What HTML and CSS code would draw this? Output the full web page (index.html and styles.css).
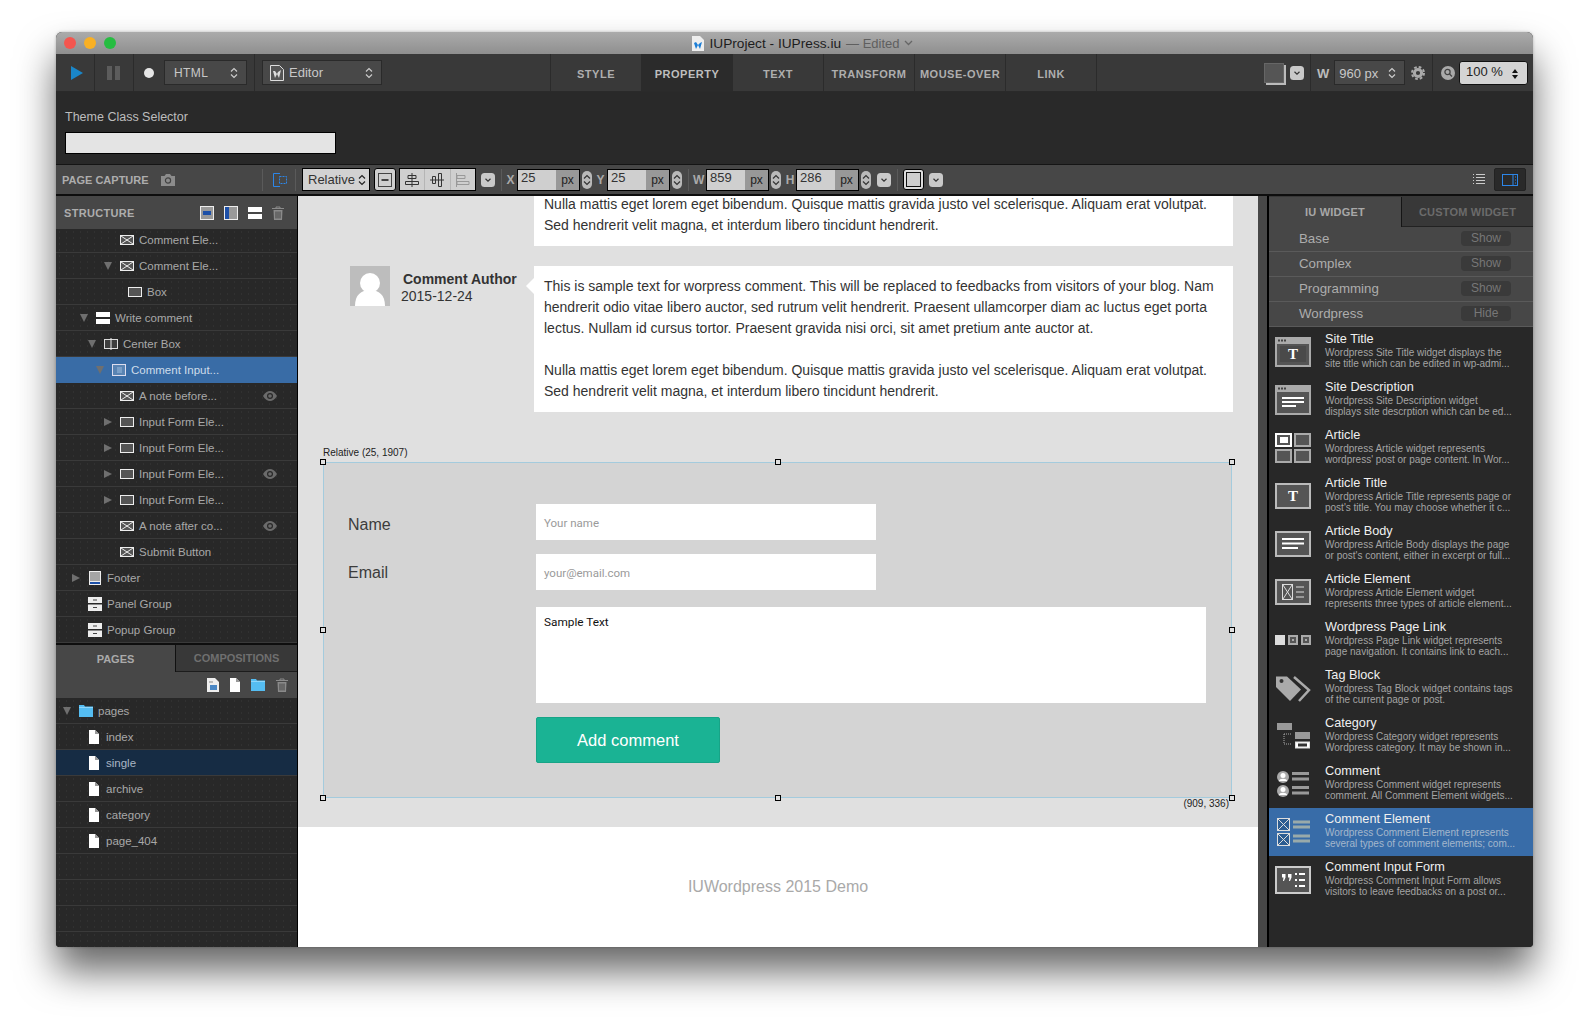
FILE: index.html
```html
<!DOCTYPE html>
<html lang="en">
<head>
    <meta charset="UTF-8">
    <title>IUProject - IUPress.iu</title>
    <link rel="stylesheet" href="styles.css">
</head>
<body>
    <svg class="sprites" width="0" height="0">
        <symbol id="updown" viewBox="0 0 8 12"><path d="M1 4.5 4 1.5l3 3M1 7.5l3 3 3-3" fill="none" stroke="currentColor" stroke-width="1.2"/></symbol>
        <symbol id="chev" viewBox="0 0 14 14"><rect width="14" height="14" rx="3.5" fill="#c9c9c9"/><path d="M4.5 5.8 7 8.2l2.5-2.4" fill="none" stroke="#333" stroke-width="1.2"/></symbol>
        <symbol id="cross" viewBox="0 0 14 10"><rect x=".5" y=".5" width="13" height="9" fill="#555" stroke="#eee"/><path d="M1 1l12 8M13 1 1 9" stroke="#eee" fill="none"/></symbol>
        <symbol id="box" viewBox="0 0 14 10"><rect x=".5" y=".5" width="13" height="9" fill="#555" stroke="#eee"/></symbol>
        <symbol id="section" viewBox="0 0 14 12"><rect width="14" height="5" fill="#fff"/><rect y="7" width="14" height="5" fill="#fff"/></symbol>
        <symbol id="center" viewBox="0 0 14 12"><rect x=".5" y="1.5" width="13" height="9" fill="#3d3d3d" stroke="#ddd"/><path d="M7 0v12" stroke="#eee"/></symbol>
        <symbol id="formbox" viewBox="0 0 14 12"><rect x=".5" y=".5" width="13" height="11" fill="#5a84b3" stroke="#dde"/><path d="M5 4h5M5 6h5M5 8h5" stroke="#9bbbdd"/></symbol>
        <symbol id="footer" viewBox="0 0 12 14"><rect width="12" height="14" fill="#eee"/><rect x="1" y="1" width="10" height="9" fill="#a5a5a5"/><rect x="1" y="11" width="10" height="2" fill="#1d50a8"/></symbol>
        <symbol id="group" viewBox="0 0 14 14"><rect width="14" height="6" fill="#eee"/><rect y="7.5" width="14" height="6.5" fill="#eee"/><path d="M5 3h4M5 10.5h4" stroke="#444"/></symbol>
        <symbol id="file" viewBox="0 0 10 14"><path d="M0 0h6l4 4v10H0z" fill="#fff"/><path d="M6 0v4h4" fill="#999"/></symbol>
        <symbol id="folder" viewBox="0 0 14 12"><path d="M0 0h5l1 1.5h8V12H0z" fill="#55bdf2"/><path d="M0 2.5h14" stroke="#8fd6fa"/></symbol>
        <symbol id="trash" viewBox="0 0 12 14"><path d="M0 2.5h12M4 2.5V1h4v1.5" fill="none" stroke="#8a8a8a"/><path d="M1.5 4h9L10 14H2z" fill="#8a8a8a"/><path d="M4 5.5V12.5M6 5.5V12.5M8 5.5V12.5" stroke="#444"/></symbol>
        <symbol id="eye" viewBox="0 0 14 10"><path d="M0 5c2-3.500 4.500-5 7-5s5 1.500 7 5c-2 3.500-4.500 5-7 5S2 8.500 0 5z" fill="#6b6b6b"/><circle cx="7" cy="5" r="3" fill="#282828"/><circle cx="7" cy="5" r="1.8" fill="#6b6b6b"/></symbol>
        <symbol id="w-frame-bar" viewBox="0 0 36 30"><rect x="1" y="1" width="34" height="28" fill="#555" stroke="#aaa" stroke-width="2"/><rect width="36" height="7" fill="#aaa"/><path d="M3 3.5h2M6 3.5h2M9 3.5h2" stroke="#444" stroke-width="2"/></symbol>
        <symbol id="w-frame" viewBox="0 0 36 26"><rect x="1" y="1" width="34" height="24" fill="#555" stroke="#bbb" stroke-width="2"/></symbol>
    </svg>

    <div class="window">
        <div class="titlebar">
            <div class="lights"><i class="red"></i><i class="yellow"></i><i class="green"></i></div>
            <div class="title">
                <svg class="doc" width="12" height="15" viewBox="0 0 12 15"><path d="M0 0h8l4 4v11H0z" fill="#eee"/><path d="M2 7l2 6 2-4 2 4 2-7-2 1-2 2-2-3z" fill="#1c7ed6"/></svg>
                <span>IUProject - IUPress.iu</span> <em>— Edited</em>
                <svg class="tchev" width="9" height="6" viewBox="0 0 9 6"><path d="M1 1l3.500 3.500L8 1" fill="none" stroke="#666" stroke-width="1.3"/></svg>
            </div>
        </div>

        <div class="toolbar">
            <div class="tool tool-play"><svg width="12" height="14" viewBox="0 0 12 14"><path d="M0 0l12 7-12 7z" fill="#1a86c8"/></svg></div>
            <div class="tool tool-pause"><i></i><i></i></div>
            <div class="tool tool-rec">
                <i class="rec-dot"></i>
                <div class="sel sel-html">HTML<svg class="ud"><use href="#updown"/></svg></div>
            </div>
            <div class="tool tool-editor">
                <div class="sel sel-editor">
                    <svg class="doc" width="14" height="16" viewBox="0 0 14 16"><path d="M.5.500h9l4 4v11H.5z" fill="#555" stroke="#ddd"/><path d="M3 6l2 7 2-4 2 4 2-8-3 2-1 2-2-3z" fill="#ddd"/></svg>
                    Editor<svg class="ud"><use href="#updown"/></svg>
                </div>
            </div>
            <div class="tabs">
                <div class="tab">STYLE</div>
                <div class="tab active">PROPERTY</div>
                <div class="tab">TEXT</div>
                <div class="tab">TRANSFORM</div>
                <div class="tab">MOUSE-OVER</div>
                <div class="tab">LINK</div>
            </div>
            <div class="tool tool-color">
                <span class="swatch"></span>
                <svg class="chev"><use href="#chev"/></svg>
            </div>
            <div class="tool tool-width">
                <b>W</b>
                <div class="sel sel-width">960 px<svg class="ud"><use href="#updown"/></svg></div>
                <svg class="gear" width="14" height="14" viewBox="0 0 14 14"><circle cx="7" cy="7" r="3.6" fill="none" stroke="#aaa" stroke-width="3"/><circle cx="7" cy="7" r="6" fill="none" stroke="#aaa" stroke-width="2" stroke-dasharray="2.7 2.01"/></svg>
            </div>
            <div class="tool tool-zoom">
                <svg width="14" height="14" viewBox="0 0 14 14"><circle cx="7" cy="7" r="7" fill="#aaa"/><circle cx="6.5" cy="6" r="2.6" fill="none" stroke="#444" stroke-width="1.3"/><path d="M8.5 8l2.500 2.500" stroke="#444" stroke-width="1.3"/></svg>
                <div class="zoom-box">100 %<span class="zoom-arrows"></span></div>
            </div>
        </div>

        <div class="theme">
            <label>Theme Class Selector</label>
            <div class="theme-input"></div>
        </div>

        <div class="controlbar">
            <div class="capture">
                <b>PAGE CAPTURE</b>
                <svg width="14" height="12" viewBox="0 0 14 12"><path d="M0 2h3.500L5 0h4l1.500 2H14v10H0z" fill="#8c8c8c"/><circle cx="7" cy="6.5" r="2.6" fill="none" stroke="#444" stroke-width="1.2"/></svg>
            </div>
            <span class="cdiv"></span>
            <svg class="pos-icon" width="14" height="14" viewBox="0 0 14 14"><path d="M7 .5H.5v13H7" fill="none" stroke="#2c86e8"/><rect x="6.5" y="3.5" width="7" height="7" fill="none" stroke="#2c86e8" stroke-dasharray="2 1"/></svg>
            <span class="cdiv"></span>
            <div class="field field-select">Relative<svg class="ud"><use href="#updown"/></svg></div>
            <div class="iconbtn"><svg width="14" height="14" viewBox="0 0 14 14"><rect x=".5" y=".5" width="13" height="13" fill="none" stroke="#444"/><path d="M3.500 7h7" stroke="#444" stroke-width="2"/></svg></div>
            <div class="aligns">
                <span><svg width="14" height="14" viewBox="0 0 14 14"><path d="M7 0v14M3 2.500h8v3H3zM.5 8.500h13v3H.5z" fill="none" stroke="#333"/></svg></span>
                <span><svg width="14" height="14" viewBox="0 0 14 14"><path d="M0 7h14M2.500 3.500h3v7h-3zM8.500 .5h3v13h-3z" fill="none" stroke="#333"/></svg></span>
                <span><svg width="14" height="14" viewBox="0 0 14 14"><path d="M.5 0v14M1 2.500h8v3H1zM1 8.500h12v3H1z" fill="none" stroke="#999"/></svg></span>
            </div>
            <svg class="chev chev-a"><use href="#chev"/></svg>
            <span class="cdiv cdiv-a"></span>
            <span class="axis axis-x">X</span>
            <div class="num"><span>25</span><i>px</i></div>
            <svg class="step"><use href="#updown"/></svg>
            <span class="axis axis-y">Y</span>
            <div class="num"><span>25</span><i>px</i></div>
            <svg class="step"><use href="#updown"/></svg>
            <span class="cdiv cdiv-b"></span>
            <span class="axis axis-w">W</span>
            <div class="num"><span>859</span><i>px</i></div>
            <svg class="step"><use href="#updown"/></svg>
            <span class="axis axis-h">H</span>
            <div class="num num-h"><span>286</span><i>px</i></div>
            <svg class="step"><use href="#updown"/></svg>
            <svg class="chev chev-b"><use href="#chev"/></svg>
            <span class="cdiv cdiv-c"></span>
            <span class="border-well"><i></i></span>
            <svg class="chev chev-c"><use href="#chev"/></svg>
            <div class="control-right">
                <svg width="12" height="11" viewBox="0 0 12 11"><path d="M0 .5h1M3 .5h9M0 3.500h1M3 3.500h9M0 6.500h1M3 6.500h9M0 9.500h1M3 9.500h9" stroke="#ccc"/></svg>
                <div class="panel-toggle"><svg width="16" height="12" viewBox="0 0 16 12"><rect x=".5" y=".5" width="15" height="11" fill="none" stroke="#2c86e8"/><path d="M11 0v12M13 3h1M13 6h1M13 9h1" stroke="#2c86e8"/></svg></div>
            </div>
        </div>

        <div class="main">
            <aside class="left">
                <div class="head">
                    <b>STRUCTURE</b>
                    <div class="head-icons">
                        <svg width="14" height="14" viewBox="0 0 14 14"><rect x=".5" y=".5" width="13" height="13" fill="#999" stroke="#eee"/><rect x="3" y="5" width="8" height="4" fill="#1d50a8"/></svg>
                        <svg width="14" height="14" viewBox="0 0 14 14"><rect x=".5" y=".5" width="13" height="13" fill="#999" stroke="#eee"/><rect x="1" y="1" width="4" height="12" fill="#1d50a8"/></svg>
                        <svg width="14" height="12" viewBox="0 0 14 12"><use href="#section"/></svg>
                        <svg width="12" height="14" viewBox="0 0 12 14"><use href="#trash"/></svg>
                    </div>
                </div>
                <div class="tree">
                    <div class="row first lv5"><i class="sp"></i><svg class="ic"><use href="#cross"/></svg>Comment Ele...</div>
                    <div class="row lv5"><i class="tw down"></i><svg class="ic"><use href="#cross"/></svg>Comment Ele...</div>
                    <div class="row lv6"><i class="sp"></i><svg class="ic"><use href="#box"/></svg>Box</div>
                    <div class="row lv2"><i class="tw down"></i><svg class="ic"><use href="#section"/></svg>Write comment</div>
                    <div class="row lv3"><i class="tw down"></i><svg class="ic"><use href="#center"/></svg>Center Box</div>
                    <div class="row lv4 selected"><i class="tw down"></i><svg class="ic"><use href="#formbox"/></svg>Comment Input...</div>
                    <div class="row lv5"><i class="sp"></i><svg class="ic"><use href="#cross"/></svg>A note before...<svg class="eye"><use href="#eye"/></svg></div>
                    <div class="row lv5"><i class="tw"></i><svg class="ic"><use href="#box"/></svg>Input Form Ele...</div>
                    <div class="row lv5"><i class="tw"></i><svg class="ic"><use href="#box"/></svg>Input Form Ele...</div>
                    <div class="row lv5"><i class="tw"></i><svg class="ic"><use href="#box"/></svg>Input Form Ele...<svg class="eye"><use href="#eye"/></svg></div>
                    <div class="row lv5"><i class="tw"></i><svg class="ic"><use href="#box"/></svg>Input Form Ele...</div>
                    <div class="row lv5"><i class="sp"></i><svg class="ic"><use href="#cross"/></svg>A note after co...<svg class="eye"><use href="#eye"/></svg></div>
                    <div class="row lv5"><i class="sp"></i><svg class="ic"><use href="#cross"/></svg>Submit Button</div>
                    <div class="row lv1"><i class="tw"></i><svg class="ic ic-tall"><use href="#footer"/></svg>Footer</div>
                    <div class="row lv1"><i class="sp"></i><svg class="ic ic-tall"><use href="#group"/></svg>Panel Group</div>
                    <div class="row lv1"><i class="sp"></i><svg class="ic ic-tall"><use href="#group"/></svg>Popup Group</div>
                </div>
                <div class="subtabs">
                    <div class="subtab on">PAGES</div>
                    <div class="subtab">COMPOSITIONS</div>
                </div>
                <div class="page-tools">
                    <svg width="12" height="14" viewBox="0 0 12 14"><path d="M0 0h8l4 4v10H0z" fill="#eee"/><rect x="3" y="7" width="7" height="5" fill="#4a87c5"/><path d="M2 4h4" stroke="#888"/></svg>
                    <svg width="10" height="14" viewBox="0 0 10 14"><use href="#file"/></svg>
                    <svg width="14" height="12" viewBox="0 0 14 12"><use href="#folder"/></svg>
                    <svg width="12" height="14" viewBox="0 0 12 14"><use href="#trash"/></svg>
                </div>
                <div class="pages">
                    <div class="row lv0"><i class="tw down"></i><svg class="ic ic-folder"><use href="#folder"/></svg>pages</div>
                    <div class="row page"><svg class="ic-file"><use href="#file"/></svg>index</div>
                    <div class="row page current"><svg class="ic-file"><use href="#file"/></svg>single</div>
                    <div class="row page"><svg class="ic-file"><use href="#file"/></svg>archive</div>
                    <div class="row page"><svg class="ic-file"><use href="#file"/></svg>category</div>
                    <div class="row page"><svg class="ic-file"><use href="#file"/></svg>page_404</div>
                    <div class="row"></div>
                    <div class="row"></div>
                    <div class="row"></div>
                    <div class="row"></div>
                </div>
            </aside>

            <div class="canvas">
                <div class="page-gray">
                    <div class="comment-card card-cut">
                        <p>Nulla mattis eget lorem eget bibendum. Quisque mattis gravida justo vel scelerisque. Aliquam erat volutpat.<br>Sed hendrerit velit magna, et interdum libero tincidunt hendrerit.</p>
                    </div>
                    <div class="comment">
                        <div class="avatar">
                            <svg width="40" height="40" viewBox="0 0 40 40"><circle cx="20" cy="17" r="10" fill="#fff"/><path d="M5 40c0-11 6-16 15-16s15 5 15 16z" fill="#fff"/></svg>
                        </div>
                        <div class="author">
                            <b>Comment Author</b>
                            <span>2015-12-24</span>
                        </div>
                        <div class="comment-card">
                            <p>This is sample text for worpress comment. This will be replaced to feedbacks from visitors of your blog. Nam hendrerit odio vitae libero auctor, sed rutrum velit hendrerit. Praesent ullamcorper diam ac luctus eget porta lectus. Nullam id cursus tortor. Praesent gravida nisi orci, sit amet pretium ante auctor at.<br><br>Nulla mattis eget lorem eget bibendum. Quisque mattis gravida justo vel scelerisque. Aliquam erat volutpat.<br>Sed hendrerit velit magna, et interdum libero tincidunt hendrerit.</p>
                        </div>
                    </div>
                    <div class="form-box">
                        <span class="sel-label">Relative (25, 1907)</span>
                        <span class="sel-size">(909, 336)</span>
                        <i class="h h-tl"></i><i class="h h-tc"></i><i class="h h-tr"></i>
                        <i class="h h-ml"></i><i class="h h-mr"></i>
                        <i class="h h-bl"></i><i class="h h-bc"></i><i class="h h-br"></i>
                        <div class="flabel flabel-name">Name</div>
                        <div class="finput">Your name</div>
                        <div class="flabel">Email</div>
                        <div class="finput">your@email.com</div>
                        <div class="ftext">Sample Text</div>
                        <div class="fbutton">Add comment</div>
                    </div>
                </div>
                <div class="page-foot">IUWordpress 2015 Demo</div>
            </div>
            <div class="strip"></div>

            <aside class="right">
                <div class="rtabs">
                    <div class="rtab on">IU WIDGET</div>
                    <div class="rtab">CUSTOM WIDGET</div>
                </div>
                <div class="cat"><span>Base</span><em>Show</em></div>
                <div class="cat"><span>Complex</span><em>Show</em></div>
                <div class="cat"><span>Programming</span><em>Show</em></div>
                <div class="cat"><span>Wordpress</span><em>Hide</em></div>
                <div class="widgets">
                    <div class="widget">
                        <svg class="wi" width="36" height="30" viewBox="0 0 36 30"><use href="#w-frame-bar"/><rect x="5" y="9" width="26" height="16" fill="#4a4a4a"/><text x="18" y="22" class="wt">T</text></svg>
                        <div class="wb"><h4>Site Title</h4><p>Wordpress Site Title widget displays the<br>site title which can be edited in wp-admi...</p></div>
                    </div>
                    <div class="widget">
                        <svg class="wi" width="36" height="30" viewBox="0 0 36 30"><use href="#w-frame-bar"/><path d="M7 13h22M7 17h22M7 21h14" stroke="#fff" stroke-width="2"/></svg>
                        <div class="wb"><h4>Site Description</h4><p>Wordpress Site Description widget<br>displays site descrption which can be ed...</p></div>
                    </div>
                    <div class="widget">
                        <svg class="wi" width="36" height="30" viewBox="0 0 36 30"><rect x="1" y="1" width="15" height="12" fill="#555" stroke="#fff" stroke-width="2"/><rect x="5" y="4" width="8" height="6" fill="#fff"/><rect x="20" y="1" width="15" height="12" fill="#555" stroke="#aaa" stroke-width="2"/><rect x="1" y="17" width="15" height="12" fill="#555" stroke="#aaa" stroke-width="2"/><rect x="20" y="17" width="15" height="12" fill="#555" stroke="#aaa" stroke-width="2"/></svg>
                        <div class="wb"><h4>Article</h4><p>Wordpress Article widget represents<br>wordpress' post or page content. In Wor...</p></div>
                    </div>
                    <div class="widget">
                        <svg class="wi" width="36" height="26" viewBox="0 0 36 26"><use href="#w-frame"/><text x="18" y="18" class="wt">T</text></svg>
                        <div class="wb"><h4>Article Title</h4><p>Wordpress Article Title represents page or<br>post's title. You may choose whether it c...</p></div>
                    </div>
                    <div class="widget">
                        <svg class="wi" width="36" height="26" viewBox="0 0 36 26"><use href="#w-frame"/><path d="M7 8h22M7 12.5h22M7 17h16" stroke="#fff" stroke-width="2"/></svg>
                        <div class="wb"><h4>Article Body</h4><p>Wordpress Article Body displays the page<br>or post's content, either in excerpt or full...</p></div>
                    </div>
                    <div class="widget">
                        <svg class="wi" width="36" height="26" viewBox="0 0 36 26"><use href="#w-frame"/><rect x="7.500" y="5.500" width="10" height="15" fill="none" stroke="#ddd"/><path d="M8 6l9 14M17 6 8 20" stroke="#ddd"/><path d="M21 8h8M21 13h8M21 18h8" stroke="#999" stroke-width="2"/></svg>
                        <div class="wb"><h4>Article Element</h4><p>Wordpress Article Element widget<br>represents three types of article element...</p></div>
                    </div>
                    <div class="widget">
                        <svg class="wi" width="36" height="10" viewBox="0 0 36 10"><rect width="10" height="10" fill="#ddd"/><rect x="14" y="1" width="8" height="8" fill="#555" stroke="#aaa" stroke-width="2"/><rect x="17" y="4" width="2" height="2" fill="#aaa"/><rect x="27" y="1" width="8" height="8" fill="#555" stroke="#aaa" stroke-width="2"/><rect x="30" y="4" width="2" height="2" fill="#aaa"/></svg>
                        <div class="wb"><h4>Wordpress Page Link</h4><p>Wordpress Page Link widget represents<br>page navigation. It contains link to each...</p></div>
                    </div>
                    <div class="widget">
                        <svg class="wi" width="36" height="28" viewBox="0 0 36 28"><path d="M1 2.500h11l14 13L15 27 1 13z" fill="#aaa"/><circle cx="6.500" cy="7" r="2" fill="#333"/><path d="M19 3l15 13-10 11" fill="none" stroke="#aaa" stroke-width="2.500"/></svg>
                        <div class="wb"><h4>Tag Block</h4><p>Wordpress Tag Block widget contains tags<br>of the current page or post.</p></div>
                    </div>
                    <div class="widget">
                        <svg class="wi" width="36" height="26" viewBox="0 0 36 26"><rect x="2" y="0" width="15" height="7" fill="#999"/><rect x="20" y="9" width="15" height="7" fill="#999"/><rect x="20.5" y="19" width="14" height="6" fill="#fff" stroke="#ddd"/><rect x="23" y="20.5" width="9" height="3" fill="#333"/><path d="M9 11h8M9 11v10h8" fill="none" stroke="#aaa" stroke-dasharray="1 1"/></svg>
                        <div class="wb"><h4>Category</h4><p>Wordpress Category widget represents<br>Wordpress category. It may be shown in...</p></div>
                    </div>
                    <div class="widget">
                        <svg class="wi" width="36" height="28" viewBox="0 0 36 28"><g id="cperson"><circle cx="8" cy="7" r="6" fill="#aaa"/><circle cx="8" cy="5.500" r="2.500" fill="#fff"/><path d="M4 11c0-3 8-3 8 0z" fill="#fff"/><path d="M17 3.500h17M17 9h17" stroke="#999" stroke-width="3"/></g><use href="#cperson" y="14"/></svg>
                        <div class="wb"><h4>Comment</h4><p>Wordpress Comment widget represents<br>comment. All Comment Element widgets...</p></div>
                    </div>
                    <div class="widget on">
                        <svg class="wi" width="36" height="28" viewBox="0 0 36 28"><rect x="2.500" y=".5" width="12" height="12" fill="#2c5c91" stroke="#ddd"/><rect x="2.500" y="15.500" width="12" height="12" fill="#2c5c91" stroke="#ddd"/><path d="M3 1l11 11M14 1 3 12M3 16l11 11M14 16 3 27" stroke="#ddd"/><path d="M18 4h17M18 9h17M18 18h17M18 23h17" stroke="#9aa" stroke-width="3"/></svg>
                        <div class="wb"><h4>Comment Element</h4><p>Wordpress Comment Element represents<br>several types of comment elements; com...</p></div>
                    </div>
                    <div class="widget">
                        <svg class="wi" width="36" height="28" viewBox="0 0 36 28"><rect x="1" y="1" width="34" height="26" fill="#555" stroke="#ccc" stroke-width="2"/><path d="M7 8h3.500v3.500L9 15H8l.5-3.500H7zM13 8h3.500v3.500L15 15h-1l.5-3.500H13z" fill="#fff"/><path d="M20 8h2M24 8h6M20 14h2M24 14h6M20 20h2M24 20h6" stroke="#fff" stroke-width="2"/></svg>
                        <div class="wb"><h4>Comment Input Form</h4><p>Wordpress Comment Input Form allows<br>visitors to leave feedbacks on a post or...</p></div>
                    </div>
                </div>
            </aside>
        </div>
    </div>
</body>
</html>
```

FILE: styles.css
```css
* {
    box-sizing: border-box;
}

html, body {
    height: 100%;
}

body {
    margin: 0;
    padding: 32px 56px 0;
    background: #fff;
    font-family: 'Liberation Sans', Arial, sans-serif;
    overflow: hidden;
}

.sprites {
    position: absolute;
}

i, em {
    font-style: normal;
}

.window {
    width: 1477px;
    height: 915px;
    display: flex;
    flex-direction: column;
    background: #282828;
    border-radius: 6px 6px 4px 4px;
    box-shadow: 0 24px 38px rgba(0, 0, 0, 0.6), 0 0 3px rgba(0, 0, 0, 0.25);
    overflow: hidden;
}

/* title bar */
.titlebar {
    height: 22px;
    flex: none;
    display: flex;
    align-items: center;
    background: linear-gradient(#ababab, #8f8f8f);
    position: relative;
}

.lights {
    display: flex;
    gap: 8px;
    margin-left: 8px;
}

.lights i {
    width: 12px;
    height: 12px;
    border-radius: 50%;
}

.red { background: #f4564f; }
.yellow { background: #f9b024; }
.green { background: #26bd41; }

.title {
    position: absolute;
    left: 0;
    right: 0;
    top: 0;
    height: 22px;
    display: flex;
    align-items: center;
    justify-content: center;
    gap: 5px;
    font-size: 13px;
    color: #1d1d1d;
    padding-left: 16px;
}

.title span {
    font-size: 13.7px;
}

.title em {
    color: #5f5f5f;
}

.tchev {
    margin-left: -1px;
}

/* top toolbar */
.toolbar {
    height: 38px;
    flex: none;
    display: flex;
    background: #393939;
    border-bottom: 1px solid #2a2a2a;
}

.tool {
    display: flex;
    align-items: center;
    border-right: 1px solid #2b2b2b;
}

.tool-play { width: 39px; padding-left: 15px; }

.tool-pause {
    width: 39px;
    padding-left: 12px;
    gap: 3px;
}

.tool-pause i {
    width: 5px;
    height: 14px;
    background: #5c5c5c;
}

.tool-rec { width: 121px; padding-left: 10px; }

.rec-dot {
    width: 10px;
    height: 10px;
    border-radius: 50%;
    background: #e6e6e6;
    margin-right: 10px;
}

.sel {
    height: 25px;
    display: flex;
    align-items: center;
    position: relative;
    background: #484848;
    border: 1px solid #2a2a2a;
    color: #c8c8c8;
    font-size: 13px;
}

.ud {
    width: 8px;
    height: 12px;
    color: #ccc;
    position: absolute;
    right: 8px;
    top: 50%;
    margin-top: -6px;
}

.sel-html { width: 83px; padding-left: 9px; font-size: 12px; letter-spacing: 0.4px; }

.tool-editor { width: 296px; padding-left: 7px; }

.sel-editor {
    width: 120px;
    padding-left: 7px;
    gap: 5px;
}

.tabs {
    display: flex;
}

.tab {
    width: 91px;
    display: flex;
    align-items: center;
    justify-content: center;
    padding-top: 2px;
    border-right: 1px solid #2b2b2b;
    font-size: 11px;
    font-weight: bold;
    letter-spacing: 0.5px;
    color: #aeaeae;
}

.tab.active {
    background: #2b2b2b;
    color: #bebebe;
}

.tool-color {
    width: 214px;
    justify-content: flex-end;
    padding-right: 6px;
    gap: 6px;
}

.swatch {
    width: 20px;
    height: 20px;
    background: #555;
    border: 1px solid #666;
    box-shadow: 2px 2px 0 #bbb;
}

.chev {
    width: 14px;
    height: 14px;
    flex: none;
}

.tool-width {
    width: 122px;
    padding-left: 6px;
    gap: 5px;
    color: #bbb;
    font-size: 13px;
}

.tool-width b {
    padding-top: 1px;
}

.sel-width {
    width: 71px;
    padding: 1px 0 0 4px;
    background: #484848;
    font-size: 13px;
}

.gear {
    margin-left: 1px;
}

.tool-zoom {
    flex: 1;
    border-right: 0;
    padding-left: 8px;
    gap: 4px;
}

.zoom-box {
    width: 69px;
    height: 24px;
    background: #d4d4d4;
    border: 1px solid #111;
    border-radius: 3px;
    font-size: 13px;
    color: #222;
    padding: 2px 0 0 6px;
    position: relative;
}

.zoom-arrows {
    position: absolute;
    right: 9px;
    top: 7px;
    border-left: 3px solid transparent;
    border-right: 3px solid transparent;
    border-bottom: 4px solid #111;
}

.zoom-arrows::after {
    content: "";
    position: absolute;
    left: -3px;
    top: 6px;
    border-left: 3px solid transparent;
    border-right: 3px solid transparent;
    border-top: 4px solid #111;
}

/* theme selector */
.theme {
    height: 72px;
    flex: none;
    padding: 17px 9px 0;
    background: #292929;
}

.theme label {
    display: block;
    font-size: 12.5px;
    line-height: 16px;
    color: #bdbdbd;
    margin-bottom: 7px;
}

.theme-input {
    width: 271px;
    height: 22px;
    background: #e4e4e4;
    border: 1px solid #000;
}

/* position control bar */
.controlbar {
    height: 32px;
    flex: none;
    display: flex;
    align-items: center;
    background: #474747;
    border-top: 1px solid #151515;
    border-bottom: 2px solid #0e0e0e;
}

.capture {
    width: 206px;
    display: flex;
    align-items: center;
    gap: 12px;
    padding-left: 6px;
    font-size: 11px;
    color: #adadad;
}

.cdiv {
    width: 1px;
    height: 22px;
    background: #5a5a5a;
    flex: none;
}

.pos-icon {
    margin: 0 8px 0 10px;
}

.field-select {
    width: 68px;
    height: 23px;
    margin-left: 6px;
    padding: 3px 0 0 5px;
    font-size: 13px;
    color: #333;
    background: #d2d2d2;
    border: 1px solid #000;
    position: relative;
}

.field-select .ud {
    color: #222;
    right: 3px;
}

.iconbtn {
    width: 22px;
    height: 23px;
    margin-left: 4px;
    display: flex;
    align-items: center;
    justify-content: center;
    background: #cfcfcf;
    border: 1px solid #000;
    border-radius: 3px;
}

.aligns {
    display: flex;
    width: 77px;
    height: 23px;
    margin-left: 3px;
    background: #cfcfcf;
    border: 1px solid #000;
}

.aligns span {
    flex: 1;
    display: flex;
    align-items: center;
    justify-content: center;
    border-right: 1px solid #b5b5b5;
}

.aligns span:last-child {
    border-right: 0;
}

.chev-a { margin-left: 5px; }
.cdiv-a { margin-left: 6px; }

.axis {
    font-size: 12px;
    font-weight: bold;
    color: #aaa;
    width: 11px;
    text-align: center;
    flex: none;
}

.axis-x { margin: 0 1px 0 3px; }
.axis-y { margin: 0 1px 0 3px; }
.axis-w { margin: 0 2px 0 4px; }
.axis-h { margin: 0 1px 0 4px; width: 10px; }

.num {
    width: 63px;
    height: 22px;
    display: flex;
    background: #cfcfcf;
    border: 1px solid #000;
    font-size: 13px;
    color: #333;
}

.num span {
    flex: 1;
    padding: 0 0 0 3px;
    line-height: 16px;
}

.num i {
    width: 23px;
    background: #989898;
    font-size: 12px;
    line-height: 20px;
    text-align: center;
    color: #222;
}

.step {
    width: 10px;
    height: 18px;
    margin-left: 2px;
    padding: 1px;
    background: #b9b9b9;
    border-radius: 5px;
    color: #333;
    flex: none;
}

.chev-b { margin-left: 6px; }
.cdiv-b { margin-left: 6px; }
.cdiv-c { margin-left: 6px; }

.border-well {
    width: 21px;
    height: 21px;
    margin-left: 5px;
    padding: 2px;
    background: #ddd;
    border: 1px solid #000;
    border-radius: 3px;
}

.border-well i {
    display: block;
    height: 100%;
    background: #cfcfcf;
    border: 1px solid #111;
}

.chev-c { margin-left: 5px; }

.control-right {
    margin-left: auto;
    display: flex;
    align-items: center;
    gap: 9px;
    padding-right: 7px;
}

.panel-toggle {
    width: 32px;
    height: 23px;
    display: flex;
    align-items: center;
    justify-content: center;
    background: #2a2a2a;
    border: 1px solid #222;
    border-radius: 2px;
}

/* workspace */
.main {
    flex: 1;
    min-height: 0;
    display: flex;
}

/* left column */
.left {
    width: 242px;
    flex: none;
    display: flex;
    flex-direction: column;
    background: #282828;
    border-right: 1px solid #000;
    overflow: hidden;
}

.head {
    height: 33px;
    flex: none;
    display: flex;
    align-items: center;
    justify-content: space-between;
    padding: 0 13px 0 8px;
    background: #474747;
    font-size: 11px;
    letter-spacing: 0.3px;
    color: #adadad;
}

.head-icons {
    display: flex;
    align-items: center;
    gap: 10px;
}

.row {
    height: 26px;
    flex: none;
    display: flex;
    align-items: center;
    position: relative;
    font-size: 11.5px;
    color: #a8a8a8;
    border-bottom: 1px solid #3a3a3a;
    background-color: #282828;
    background-image: radial-gradient(#313131 0.6px, transparent 0.8px);
    background-size: 7px 6px;
}

.row.first {
    height: 24px;
    padding-bottom: 1px;
}

.lv0 { padding-left: 7px; }
.lv1 { padding-left: 16px; }
.lv2 { padding-left: 24px; }
.lv3 { padding-left: 32px; }
.lv4 { padding-left: 40px; }
.lv5 { padding-left: 48px; }
.lv6 { padding-left: 56px; }

.row.selected {
    background: #396ca6;
    color: #cfdcea;
    border-bottom-color: #396ca6;
}

.tw, .sp {
    width: 16px;
    flex: none;
}

.tw::before {
    content: "";
    display: block;
    width: 0;
    height: 0;
    border-top: 4.5px solid transparent;
    border-bottom: 4.5px solid transparent;
    border-left: 8px solid #6f6f6f;
}

.tw.down::before {
    border-left: 4.5px solid transparent;
    border-right: 4.5px solid transparent;
    border-bottom: 0;
    border-top: 8px solid #6f6f6f;
}

.ic {
    width: 14px;
    height: 12px;
    margin-right: 5px;
    flex: none;
}

.ic-tall {
    height: 14px;
}

.ic-folder {
    margin-left: 0;
}

.ic-file {
    width: 10px;
    height: 14px;
    margin-right: 7px;
    flex: none;
}

.row.page {
    padding-left: 33px;
}

.row.current {
    background: #162c44;
    color: #a9b6c4;
}

.eye {
    position: absolute;
    right: 20px;
    top: 8px;
    width: 14px;
    height: 10px;
}

.subtabs {
    height: 29px;
    flex: none;
    display: flex;
    border-top: 2px solid #0e0e0e;
    background: #383838;
}

.subtab {
    flex: 1;
    display: flex;
    align-items: center;
    justify-content: center;
    font-size: 11px;
    font-weight: bold;
    color: #6f6f6f;
    border-bottom: 1px solid #1c1c1c;
}

.subtab.on {
    flex: none;
    width: 120px;
    background: #474747;
    color: #aaa;
    border-right: 1px solid #111;
    border-bottom: 0;
}

.page-tools {
    height: 26px;
    flex: none;
    display: flex;
    align-items: center;
    justify-content: flex-end;
    gap: 11px;
    padding-right: 9px;
    background: #474747;
}

/* canvas */
.canvas {
    width: 960px;
    flex: none;
    display: flex;
    flex-direction: column;
    background: #fff;
    overflow: hidden;
}

.page-gray {
    height: 631px;
    flex: none;
    padding-left: 25px;
    background: #e0e0e0;
}

.comment-card {
    width: 699px;
    height: 146px;
    padding: 10px;
    background: #fff;
    position: relative;
    font-size: 14px;
    line-height: 21px;
    color: #333;
}

.comment-card p {
    margin: 0;
}

.card-cut {
    height: 50px;
    margin-left: 211px;
    padding-top: 0;
    overflow: hidden;
}

.card-cut p {
    margin-top: -2px;
}

.comment {
    display: flex;
    align-items: flex-start;
    margin-top: 20px;
    padding-left: 27px;
}

.avatar {
    width: 40px;
    height: 40px;
    flex: none;
    background: #bdbdbd;
    overflow: hidden;
}

.author {
    width: 144px;
    padding: 5px 0 0 11px;
    color: #333;
    font-size: 14px;
    line-height: 17px;
}

.author b {
    display: block;
    padding-left: 2px;
}

.author span {
    display: block;
}

.comment .comment-card::before {
    content: "";
    position: absolute;
    left: -8px;
    top: 12px;
    width: 8px;
    height: 16px;
    background: #fff;
    clip-path: polygon(100% 0, 0 50%, 100% 100%);
}

.form-box {
    width: 909px;
    height: 336px;
    margin-top: 50px;
    position: relative;
    display: grid;
    grid-template-columns: 188px 1fr;
    grid-template-rows: 36px 36px 99px 46px;
    gap: 14px 0;
    padding: 41px 0 0 24px;
    background: #d4d4d4;
    border: 1px solid #a4cbdd;
}

.flabel {
    font-size: 16px;
    line-height: 38px;
    color: #3c3c3c;
}

.flabel-name {
    padding-top: 2px;
}

.finput {
    width: 340px;
    padding: 0 8px;
    background: #fff;
    font-family: Roboto, sans-serif;
    font-size: 11.5px;
    line-height: 39px;
    color: #9a9a9a;
}

.ftext {
    grid-column: 2;
    width: 670px;
    margin-top: 3px;
    padding: 8px;
    background: #fff;
    font-family: Roboto, sans-serif;
    font-size: 11.8px;
    line-height: 15px;
    color: #111;
}

.fbutton {
    grid-column: 2;
    width: 184px;
    height: 46px;
    background: #1ab394;
    border: 1px solid #17a487;
    border-radius: 2px;
    font-size: 16.5px;
    line-height: 44px;
    text-align: center;
    color: #fff;
}

.sel-label, .sel-size {
    position: absolute;
    font-size: 10px;
    line-height: 12px;
    color: #222;
}

.sel-label { left: -1px; top: -16px; }
.sel-size { right: 2px; bottom: -13px; }

.h {
    position: absolute;
    width: 6px;
    height: 6px;
    background: #e0e0e0;
    border: 1px solid #000;
}

.h-tl { left: -4px; top: -4px; }
.h-tc { left: 451px; top: -4px; }
.h-tr { right: -4px; top: -4px; }
.h-ml { left: -4px; top: 164px; }
.h-mr { right: -4px; top: 164px; }
.h-bl { left: -4px; bottom: -4px; }
.h-bc { left: 451px; bottom: -4px; }
.h-br { right: -4px; bottom: -4px; }

.page-foot {
    flex: 1;
    padding-top: 50px;
    text-align: center;
    font-size: 16px;
    line-height: 20px;
    color: #a9a9a9;
}

.strip {
    width: 9px;
    flex: none;
    background: #474747;
}

/* right column */
.right {
    flex: 1;
    min-width: 0;
    display: flex;
    flex-direction: column;
    border-left: 2px solid #000;
    background: #282828;
}

.rtabs {
    height: 31px;
    flex: none;
    display: flex;
    padding-top: 1px;
    background: #383838;
}

.rtab {
    flex: 1;
    display: flex;
    align-items: center;
    justify-content: center;
    font-size: 11px;
    font-weight: bold;
    letter-spacing: 0.2px;
    color: #6b6b6b;
    border-bottom: 1px solid #222;
}

.rtab.on {
    flex: none;
    width: 133px;
    background: #474747;
    color: #a8a8a8;
    border-right: 1px solid #151515;
    border-bottom: 0;
}

.cat {
    height: 25px;
    flex: none;
    display: flex;
    align-items: center;
    justify-content: space-between;
    padding: 0 22px 2px 30px;
    background: #474747;
    border-bottom: 1px solid #5a5a5a;
    font-size: 13.3px;
    color: #adadad;
}

.cat:last-of-type {
    height: 24px;
}

.cat em {
    width: 50px;
    height: 15px;
    background: #3a3a3a;
    border-radius: 4px;
    font-size: 12px;
    line-height: 15px;
    text-align: center;
    color: #777;
}

.widgets {
    flex: 1;
    padding-top: 0.5px;
}

.widget {
    height: 48px;
    display: flex;
    align-items: center;
    position: relative;
    color: #a4a4a4;
}

.widget.on {
    background: #386ca8;
    color: #a4b7cc;
}

.wi {
    margin-left: 6px;
    flex: none;
}

.wt {
    font-family: 'Liberation Serif', serif;
    font-size: 15px;
    font-weight: bold;
    fill: #fff;
    text-anchor: middle;
}

.wb {
    position: absolute;
    left: 56px;
    top: 4px;
    white-space: nowrap;
}

.wb h4 {
    margin: 0;
    font-size: 12.7px;
    line-height: 15px;
    font-weight: normal;
    color: #f0f0f0;
}

.wb p {
    margin: 0;
    font-size: 10px;
    line-height: 11px;
}
```
